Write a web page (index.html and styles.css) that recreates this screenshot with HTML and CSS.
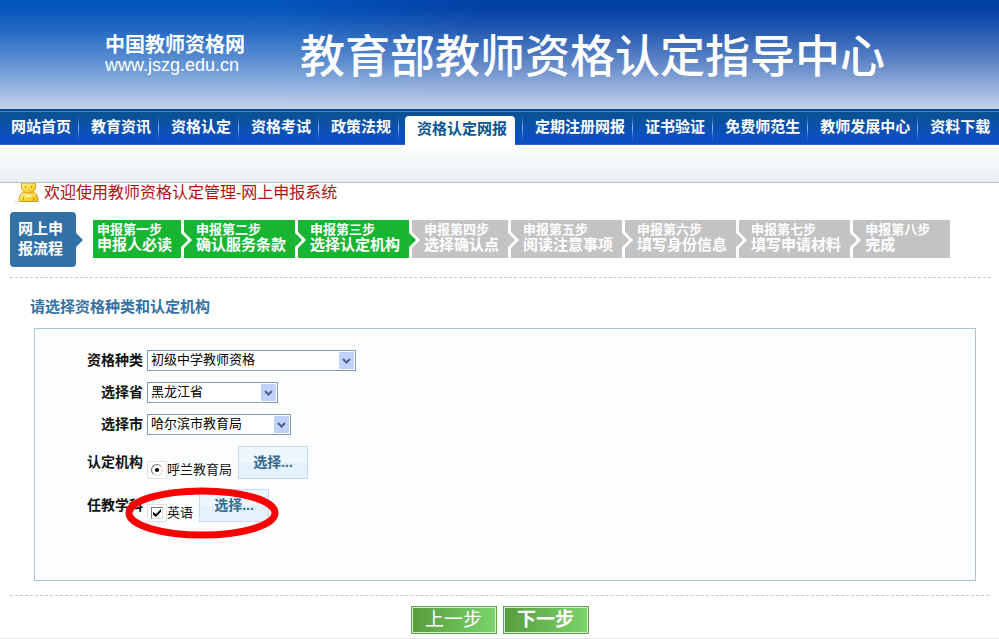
FILE: index.html
```html
<!DOCTYPE html>
<html lang="zh-CN">
<head>
    <meta charset="UTF-8">
    <meta name="viewport" content="width=device-width, initial-scale=1.0">
    <title>中国教师资格网</title>
    <link rel="stylesheet" href="styles.css">
</head>
<body>
    <header class="banner">
        <div class="logo">
            <div class="logo-name">中国教师资格网</div>
            <div class="logo-url">www.jszg.edu.cn</div>
        </div>
        <h1>教育部教师资格认定指导中心</h1>
    </header>
    <nav>
        <ul>
            <li><a href="#">网站首页</a></li>
            <li><a href="#">教育资讯</a></li>
            <li><a href="#">资格认定</a></li>
            <li><a href="#">资格考试</a></li>
            <li><a href="#">政策法规</a></li>
            <li class="active"><a href="#">资格认定网报</a></li>
            <li><a href="#">定期注册网报</a></li>
            <li><a href="#">证书验证</a></li>
            <li><a href="#">免费师范生</a></li>
            <li><a href="#">教师发展中心</a></li>
            <li><a href="#">资料下载</a></li>
        </ul>
    </nav>
    <div class="subnav"></div>
    <main>
        <div class="welcome">
            <svg class="user-icon" width="28" height="19" viewBox="0 0 28 19">
                <defs>
                    <linearGradient id="gold" x1="0" y1="0" x2="1" y2="1">
                        <stop offset="0" stop-color="#fff0a0"/>
                        <stop offset="0.5" stop-color="#fbdc45"/>
                        <stop offset="1" stop-color="#eab414"/>
                    </linearGradient>
                </defs>
                <path d="M0 18.500h26" stroke="#ddd"/>
                <path d="M6 18.500c-2-1-1.500-2.500-.5-4C6 11.500 7.500 9.500 10 9h9c2.500.5 4 2.500 4.500 5.500 1 1.500 1.500 3-.5 4z" fill="url(#gold)" stroke="#cf9a1c"/>
                <path d="M9.500 14v3.500M19.500 14v3.500" stroke="#cf9a1c"/>
                <path d="M7.500 0c-1 6 1.500 10 7 10s8-4 7-10z" fill="url(#gold)" stroke="#cf9a1c"/>
                <path d="M11.500 3v2M17.500 3v2" stroke="#b98a20"/>
                <path d="M12 13h5" stroke="#fff3b0" stroke-width="2"/>
            </svg>
            <span>欢迎使用教师资格认定管理-网上申报系统</span>
        </div>
        <div class="flow">
            <div class="flow-title">网上申<br>报流程</div>
            <ol class="steps">
                <li class="done"><small>申报第一步</small><b>申报人必读</b></li>
                <li class="done"><small>申报第二步</small><b>确认服务条款</b></li>
                <li class="done"><small>申报第三步</small><b>选择认定机构</b></li>
                <li><small>申报第四步</small><b>选择确认点</b></li>
                <li><small>申报第五步</small><b>阅读注意事项</b></li>
                <li><small>申报第六步</small><b>填写身份信息</b></li>
                <li><small>申报第七步</small><b>填写申请材料</b></li>
                <li><small>申报第八步</small><b>完成</b></li>
            </ol>
        </div>
        <h2>请选择资格种类和认定机构</h2>
        <form>
            <div class="panel">
                <div class="row">
                    <label class="name" for="kind">资格种类</label>
                    <span class="select select-kind">
                        <select id="kind"><option>初级中学教师资格</option></select>
                        <svg width="15" height="17" viewBox="0 0 15 17"><rect width="15" height="17" rx="1"/><path d="M4 7l3.500 3.500L11 7"/></svg>
                    </span>
                </div>
                <div class="row">
                    <label class="name" for="province">选择省</label>
                    <span class="select select-province">
                        <select id="province"><option>黑龙江省</option></select>
                        <svg width="15" height="17" viewBox="0 0 15 17"><rect width="15" height="17" rx="1"/><path d="M4 7l3.500 3.500L11 7"/></svg>
                    </span>
                </div>
                <div class="row">
                    <label class="name" for="city">选择市</label>
                    <span class="select select-city">
                        <select id="city"><option>哈尔滨市教育局</option></select>
                        <svg width="15" height="17" viewBox="0 0 15 17"><rect width="15" height="17" rx="1"/><path d="M4 7l3.500 3.500L11 7"/></svg>
                    </span>
                </div>
                <div class="row">
                    <span class="name">认定机构</span>
                    <label class="choice"><span class="tick"><input type="radio" name="org" checked></span>呼兰教育局</label>
                    <button type="button" class="pick">选择...</button>
                </div>
                <div class="row">
                    <span class="name">任教学科</span>
                    <label class="choice"><span class="tick"><input type="checkbox" name="subject" checked></span>英语</label>
                    <button type="button" class="pick">选择...</button>
                    <svg class="mark" width="156" height="52" viewBox="0 0 156 52">
                        <ellipse cx="78" cy="26" rx="73" ry="22"/>
                    </svg>
                </div>
            </div>
            <div class="actions">
                <button type="button">上一步</button>
                <button type="submit" class="next">下一步</button>
            </div>
        </form>
    </main>
</body>
</html>
```

FILE: styles.css
```css
* {
    box-sizing: border-box;
}
body {
    margin: 0;
    font-family: "Liberation Sans", "Noto Sans CJK SC", sans-serif;
    font-size: 13px;
    color: #111;
    background-color: #ffffff;
}
ul, ol {
    list-style: none;
    margin: 0;
    padding: 0;
}
.banner {
    height: 109px;
    padding-left: 105px;
    display: flex;
    align-items: center;
    gap: 55px;
    color: #ffffff;
    white-space: nowrap;
    background-image:
        linear-gradient(to bottom, rgba(196,211,236,0) 8%, rgba(196,211,236,0.17) 28%, rgba(196,211,236,0.45) 55%, #c4d3ec 100%),
        linear-gradient(to right, #0455bc 0%, #0455bc 28%, #0341a6 48%);
}
.logo-name {
    font-size: 20px;
    font-weight: bold;
    line-height: 20px;
}
.logo-url {
    font-size: 18px;
    line-height: 20px;
}
.banner h1 {
    margin: 0;
    padding-top: 6px;
    font-size: 45px;
    font-weight: 500;
    line-height: 48px;
}
nav {
    border-top: 2px solid #0a4a9c;
    background-image: linear-gradient(to bottom, #3c8ac4 0, #3c8ac4 1px, #08528f 1px, #0c4fc2 80%);
    border-bottom: 1px solid #2d66cc;
}
nav ul {
    display: flex;
    height: 33px;
    padding-top: 1px;
}
nav li {
    flex: none;
    display: flex;
    padding: 0 7px 0 12px;
    border-left: 1px solid;
    border-image: linear-gradient(to bottom, rgba(255,255,255,0) 15%, #8db8e4 50%, rgba(255,255,255,0) 85%) 1;
}
nav li:first-child {
    padding-left: 11px;
    border-left: 0;
}
nav a {
    color: #ffffff;
    font-size: 15px;
    font-weight: bold;
    line-height: 30px;
    text-decoration: none;
    white-space: nowrap;
}
nav .active {
    padding: 4px 7px 0 6px;
}
nav .active a {
    padding: 0 8px 0 12px;
    line-height: 26px;
    height: 29px;
    color: #0b5590;
    background-color: #ffffff;
    border-radius: 4px 4px 0 0;
}
.subnav {
    height: 38px;
    border-bottom: 1px solid #b9bfc3;
    background-image: linear-gradient(to bottom, #ffffff, #e8f0f4);
}
.welcome {
    display: flex;
    gap: 2px;
    padding-left: 14px;
    height: 29px;
    font-size: 16px;
    line-height: 19px;
    color: #b01010;
}
.flow {
    display: flex;
    align-items: flex-start;
    gap: 17px;
    margin: 0 8px 0 10px;
    padding-bottom: 10px;
    border-bottom: 1px dashed #c8c8c8;
}
.flow-title {
    flex: none;
    position: relative;
    padding: 7px 13px 8px 8px;
    font-size: 15px;
    font-weight: bold;
    line-height: 20px;
    color: #ffffff;
    background-color: #3271a5;
    border-radius: 4px;
}
.flow-title::after {
    content: "";
    position: absolute;
    left: 100%;
    top: 21px;
    width: 7px;
    height: 14px;
    background-color: #3271a5;
    clip-path: polygon(0 0, 100% 50%, 0 100%);
}
.steps {
    display: flex;
    gap: 3px;
    padding-top: 8px;
}
.steps li {
    flex: none;
    position: relative;
    height: 38px;
    padding: 2px 9px 0 12px;
    color: #ffffff;
    background-color: #c3c3c3;
    white-space: nowrap;
}
.steps li:first-child {
    padding-left: 4px;
}
.steps li:last-child {
    min-width: 97px;
}
.steps .done {
    background-color: #17b532;
}
.steps li + li::before,
.steps li + li::after {
    content: "";
    position: absolute;
    left: -3px;
    top: 9px;
    width: 11px;
    height: 22px;
    background-color: #ffffff;
    clip-path: polygon(0 0, 100% 50%, 0 100%);
}
.steps li + li::after {
    top: 13px;
    width: 7px;
    height: 14px;
    background-color: #c3c3c3;
}
.steps .done + li::after {
    background-color: #17b532;
}
.steps small {
    display: block;
    font-size: 13px;
    font-weight: bold;
    line-height: 15px;
}
.steps b {
    display: block;
    font-size: 15px;
    line-height: 16px;
}
h2 {
    margin: 19px 0 11px 30px;
    font-size: 15px;
    line-height: 20px;
    color: #3571a3;
}
.panel {
    margin: 0 23px 0 34px;
    padding: 21px 0 58px 52px;
    border: 1px solid #a9c6d8;
    background-color: #fbfefd;
}
.row {
    position: relative;
    display: flex;
    align-items: center;
    gap: 4px;
    margin-bottom: 11px;
}
.row:nth-child(n+4) {
    margin-bottom: 10px;
}
.row:last-child {
    margin-bottom: 0;
}
.name {
    width: 56px;
    padding-bottom: 1px;
    font-size: 14px;
    font-weight: bold;
    line-height: 18px;
    text-align: right;
    white-space: nowrap;
}
.select {
    position: relative;
    height: 21px;
}
.select-kind {
    width: 209px;
}
.select-province {
    width: 131px;
}
.select-city {
    width: 144px;
}
.select select {
    appearance: none;
    display: block;
    width: 100%;
    height: 21px;
    padding: 0 20px 1px 3px;
    border: 1px solid #7f9db9;
    border-radius: 0;
    background-color: #ffffff;
    color: #000;
    font-family: inherit;
    font-size: 13px;
    line-height: 18px;
}
.select svg {
    position: absolute;
    top: 2px;
    right: 2px;
    pointer-events: none;
}
.select rect {
    fill: #c1d2fa;
}
.select path {
    fill: none;
    stroke: #4d6185;
    stroke-width: 2;
}
.choice {
    align-self: flex-end;
    display: flex;
    align-items: center;
    height: 18px;
    margin-right: 2px;
    line-height: 16px;
}
.tick {
    display: flex;
    align-items: center;
    justify-content: center;
    width: 20px;
    height: 18px;
    border: 1px solid #dde3e6;
    background-color: #ffffff;
}
.tick input {
    appearance: none;
    display: grid;
    place-content: center;
    width: 12px;
    height: 12px;
    margin: 0;
    border: 1px solid;
    border-color: #777 #d8d8d8 #d8d8d8 #777;
    background-color: #ffffff;
}
.tick input[type="radio"] {
    border-radius: 50%;
}
.tick input[type="radio"]:checked::before {
    content: "";
    width: 4px;
    height: 4px;
    border-radius: 50%;
    background-color: #000;
}
.tick input[type="checkbox"]:checked::before {
    content: "";
    width: 8px;
    height: 8px;
    background-color: #000;
    clip-path: polygon(0 35%, 35% 65%, 100% 0, 100% 35%, 35% 100%, 0 70%);
}
.pick {
    width: 70px;
    height: 33px;
    padding: 0 0 4px;
    border: 1px solid #c5dcf0;
    background-image: linear-gradient(to bottom, #eef7fd 0%, #eef7fd 45%, #e4f1fb 55%, #e6f2fb 100%);
    color: #35698f;
    font-family: inherit;
    font-size: 14px;
    font-weight: bold;
}
.mark {
    position: absolute;
    left: 37px;
    top: -2px;
    pointer-events: none;
}
.mark ellipse {
    fill: none;
    stroke: #fb0000;
    stroke-width: 7;
}
.actions {
    display: flex;
    justify-content: center;
    gap: 6px;
    margin: 14px 10px 0;
    padding: 10px 0 4px;
    border-top: 1px dashed #c8c8c8;
}
.actions button {
    width: 86px;
    height: 28px;
    padding: 0;
    border: 1px solid #5fa54c;
    box-shadow: inset 0 0 0 1px #d5f0cc;
    background-image: linear-gradient(to right, #589c3c, #7bd46d);
    color: #ffffff;
    font-family: inherit;
    font-size: 19px;
    line-height: 24px;
}
.actions .next {
    font-weight: bold;
}
main {
    border-bottom: 1px solid #e8e8e8;
}
```
